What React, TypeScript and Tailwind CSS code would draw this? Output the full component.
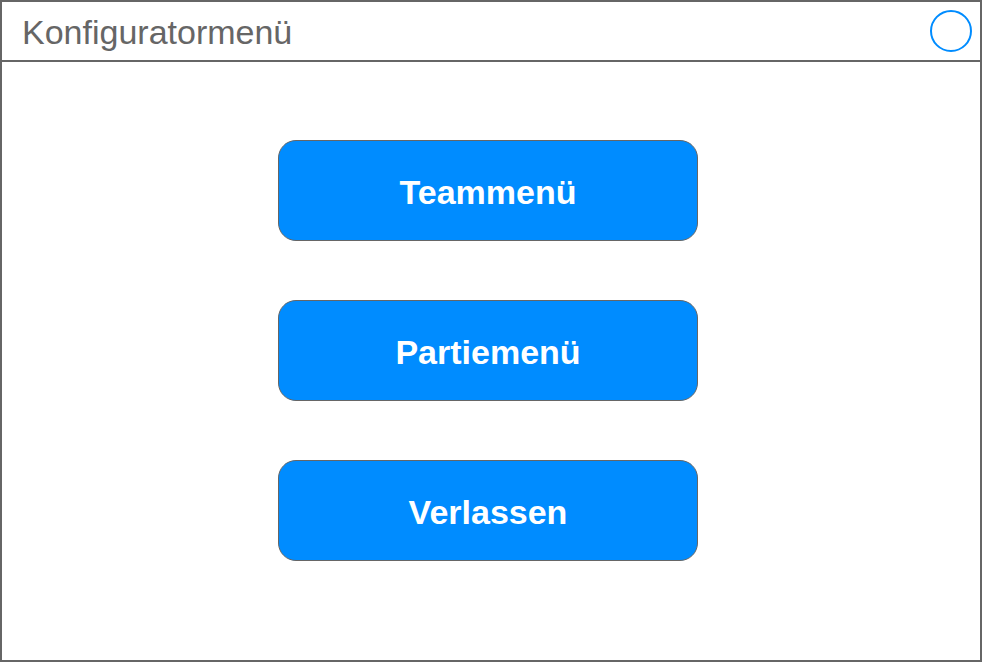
export default function App() {
  const items = ['Teammenü', 'Partiemenü', 'Verlassen']

  return (
    <div className="w-[982px] h-[662px] border-2 border-[#666666] bg-white flex flex-col" style={{ fontFamily: '"Liberation Sans", Arial, sans-serif' }}>
      {/* Header */}
      <div className="h-[60px] border-b-2 border-[#666666] flex items-center justify-between pl-[20px] pr-[8px]">
        <span className="text-[34px] text-[#666666] leading-none pt-[2px]">Konfiguratormenü</span>
        <div className="w-[42px] h-[42px] rounded-full border-2 border-[#008cff]" />
      </div>

      {/* Buttons */}
      <div className="flex flex-col gap-[59px] pl-[276px] pt-[78px]">
        {items.map((label) => (
          <button
            key={label}
            className="w-[420px] h-[101px] rounded-[18px] border border-[#666666] bg-[#008cff] text-white font-bold text-[34px] flex items-center justify-center pt-[3px]"
          >
            {label}
          </button>
        ))}
      </div>
    </div>
  )
}
